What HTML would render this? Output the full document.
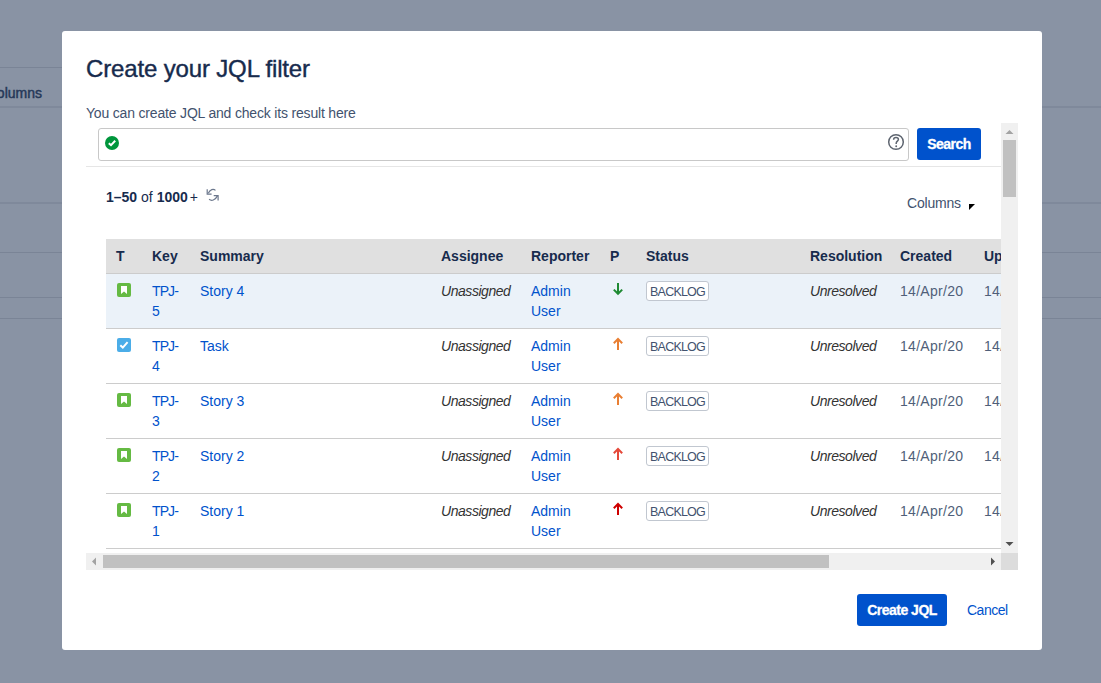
<!DOCTYPE html>
<html><head><meta charset="utf-8">
<style>
*{box-sizing:border-box}
html,body{margin:0;padding:0;width:1101px;height:683px;overflow:hidden;background:#8993a4;font-family:"Liberation Sans",sans-serif;color:#172b4d}
.bgline{position:absolute;height:1px;background:#7a8496}
#modal{position:absolute;left:62px;top:31px;width:980px;height:619px;background:#fff;border-radius:3px}
.t{position:absolute;white-space:nowrap;line-height:20px;font-size:14px}
.box{position:absolute}
.hd{font-weight:bold;color:#172b4d}
.lk{color:#0052cc}
.it{font-style:italic;color:#333;letter-spacing:-0.45px}
.dt{color:#505f79;letter-spacing:0.3px}
.loz{position:absolute;width:63px;height:20px;border:1px solid #c1c7d0;border-radius:3px;background:#fff;font-size:12.5px;line-height:20px;text-align:center;color:#42526e;letter-spacing:-0.8px}
.rowline{position:absolute;left:106px;width:895px;height:1px;background:#cccccc}
</style></head><body>
<!-- background lines -->
<div class="bgline" style="left:0;top:67px;width:62px"></div>
<div class="bgline" style="left:0;top:106px;width:1101px;height:2px;background:#7f899b"></div>
<div class="bgline" style="left:0;top:202px;width:1101px;height:2px;background:#7f899b"></div>
<div class="bgline" style="left:0;top:252px;width:1101px"></div>
<div class="bgline" style="left:0;top:297px;width:1101px"></div>
<div class="bgline" style="left:0;top:318px;width:1101px"></div>
<div class="t" style="right:1059px;top:83px;color:#253858;-webkit-text-stroke:0.45px #253858;letter-spacing:0px">Columns</div>

<div id="modal"></div>
<div class="t" style="left:86px;top:57px;font-size:24px;line-height:24px;color:#172b4d;letter-spacing:-0.15px;-webkit-text-stroke:0.4px #172b4d">Create your JQL filter</div>
<div class="t" style="left:86px;top:103px;color:#42526e;letter-spacing:-0.18px">You can create JQL and check its result here</div>

<!-- scroll container content -->
<div class="box" style="left:98px;top:128px;width:811px;height:33px;border:1px solid #c8c8c8;border-radius:3px;background:#fff"></div>
<svg class="box" style="left:105px;top:136px" width="14" height="14" viewBox="0 0 14 14"><circle cx="7" cy="7" r="7" fill="#00963c"/><path d="M3.8 7.2 L6 9.2 L10.2 4.8" stroke="#fff" stroke-width="2" fill="none"/></svg>
<svg class="box" style="left:887px;top:133px" width="18" height="18" viewBox="0 0 18 18"><circle cx="9" cy="9" r="7.3" stroke="#5e6570" stroke-width="1.5" fill="none"/><path d="M6.6 6.7 C6.6 5.2 7.7 4.5 9 4.5 C10.4 4.5 11.4 5.3 11.4 6.5 C11.4 8.1 9.2 8.3 9.2 10.3 V11" stroke="#5e6570" stroke-width="1.5" fill="none"/><circle cx="9.2" cy="13.3" r="0.95" fill="#5e6570"/></svg>
<div class="box" style="left:917px;top:128px;width:64px;height:32px;background:#0052cc;border-radius:3px;color:#fff;font-weight:bold;font-size:14px;line-height:32px;text-align:center;letter-spacing:-0.5px;-webkit-text-stroke:0.3px #fff">Search</div>
<div class="box" style="left:86px;top:166px;width:915px;height:1px;background:#e6e6e6"></div>

<div class="t" style="left:106px;top:187px;color:#172b4d"><b>1–50</b> of <b>1000</b><span style="margin-left:2px">+</span></div>
<svg class="box" style="left:204px;top:186px" width="18" height="18" viewBox="0 0 18 18" fill="none" stroke="#6b778c" stroke-width="1.2"><path d="M11.5 4.4 C9.5 2.5 6 3.2 4.3 7.2"/><path d="M3.2 3.2 V8.2 H7.6"/><path d="M5.1 13.3 C7.5 15.2 11 14.6 13.6 9.6"/><path d="M14.1 14.6 V9.6 H9.7"/></svg>

<div class="t" style="left:907px;top:193px;color:#42526e;letter-spacing:-0.2px">Columns</div>
<svg class="box" style="left:968px;top:203px" width="8" height="8" viewBox="0 0 8 8"><path d="M1 1 H7 L1 7 Z" fill="#000"/></svg>

<!-- table header -->
<div class="box" style="left:106px;top:239px;width:895px;height:34px;background:#e0e0e0"></div>
<div class="rowline" style="top:273px"></div>
<div class="t hd" style="left:116px;top:246px">T</div>
<div class="t hd" style="left:152px;top:246px">Key</div>
<div class="t hd" style="left:200px;top:246px">Summary</div>
<div class="t hd" style="left:441px;top:246px">Assignee</div>
<div class="t hd" style="left:531px;top:246px">Reporter</div>
<div class="t hd" style="left:610px;top:246px">P</div>
<div class="t hd" style="left:646px;top:246px">Status</div>
<div class="t hd" style="left:810px;top:246px">Resolution</div>
<div class="t hd" style="left:900px;top:246px">Created</div>
<div class="t hd" style="left:984px;top:246px;width:17px;overflow:hidden">Updated</div>

<!-- rows -->
<div class="box" style="left:106px;top:274px;width:895px;height:54px;background:#ebf2f9"></div>
<!--ROWS-->
<svg class="box" style="left:117px;top:283px" width="14" height="14" viewBox="0 0 14 14"><rect width="14" height="14" rx="2" fill="#65ba43"/><path d="M4 3 H10 V11 L7 8.6 L4 11 Z" fill="#fff"/></svg>
<div class="t lk" style="left:152px;top:281px;letter-spacing:-0.9px">TPJ-</div>
<div class="t lk" style="left:152px;top:301px">5</div>
<div class="t lk" style="left:200px;top:281px">Story 4</div>
<div class="t it" style="left:441px;top:281px">Unassigned</div>
<div class="t lk" style="left:531px;top:281px">Admin</div>
<div class="t lk" style="left:531px;top:301px">User</div>
<svg class="box" style="left:612px;top:282px" width="12" height="14" viewBox="0 0 12 14" fill="none" stroke="#1f8a33" stroke-width="2"><path d="M6 1 V12"/><path d="M1.8 7.6 L6 11.8 L10.2 7.6"/></svg>
<div class="loz" style="left:646px;top:281px">BACKLOG</div>
<div class="t it" style="left:810px;top:281px">Unresolved</div>
<div class="t dt" style="left:900px;top:281px">14/Apr/20</div>
<div class="t dt" style="left:984px;top:281px;width:17px;overflow:hidden">14/Apr/20</div>
<div class="rowline" style="top:328px"></div>
<svg class="box" style="left:117px;top:338px" width="14" height="14" viewBox="0 0 14 14"><rect width="14" height="14" rx="2" fill="#4bade8"/><path d="M3.3 7.3 L5.8 9.6 L10.6 4.2" stroke="#fff" stroke-width="2" fill="none"/></svg>
<div class="t lk" style="left:152px;top:336px;letter-spacing:-0.9px">TPJ-</div>
<div class="t lk" style="left:152px;top:356px">4</div>
<div class="t lk" style="left:200px;top:336px">Task</div>
<div class="t it" style="left:441px;top:336px">Unassigned</div>
<div class="t lk" style="left:531px;top:336px">Admin</div>
<div class="t lk" style="left:531px;top:356px">User</div>
<svg class="box" style="left:612px;top:337px" width="12" height="14" viewBox="0 0 12 14" fill="none" stroke="#e97f33" stroke-width="2"><path d="M6 13 V2"/><path d="M1.8 6.2 L6 2 L10.2 6.2"/></svg>
<div class="loz" style="left:646px;top:336px">BACKLOG</div>
<div class="t it" style="left:810px;top:336px">Unresolved</div>
<div class="t dt" style="left:900px;top:336px">14/Apr/20</div>
<div class="t dt" style="left:984px;top:336px;width:17px;overflow:hidden">14/Apr/20</div>
<div class="rowline" style="top:383px"></div>
<svg class="box" style="left:117px;top:393px" width="14" height="14" viewBox="0 0 14 14"><rect width="14" height="14" rx="2" fill="#65ba43"/><path d="M4 3 H10 V11 L7 8.6 L4 11 Z" fill="#fff"/></svg>
<div class="t lk" style="left:152px;top:391px;letter-spacing:-0.9px">TPJ-</div>
<div class="t lk" style="left:152px;top:411px">3</div>
<div class="t lk" style="left:200px;top:391px">Story 3</div>
<div class="t it" style="left:441px;top:391px">Unassigned</div>
<div class="t lk" style="left:531px;top:391px">Admin</div>
<div class="t lk" style="left:531px;top:411px">User</div>
<svg class="box" style="left:612px;top:392px" width="12" height="14" viewBox="0 0 12 14" fill="none" stroke="#e97f33" stroke-width="2"><path d="M6 13 V2"/><path d="M1.8 6.2 L6 2 L10.2 6.2"/></svg>
<div class="loz" style="left:646px;top:391px">BACKLOG</div>
<div class="t it" style="left:810px;top:391px">Unresolved</div>
<div class="t dt" style="left:900px;top:391px">14/Apr/20</div>
<div class="t dt" style="left:984px;top:391px;width:17px;overflow:hidden">14/Apr/20</div>
<div class="rowline" style="top:438px"></div>
<svg class="box" style="left:117px;top:448px" width="14" height="14" viewBox="0 0 14 14"><rect width="14" height="14" rx="2" fill="#65ba43"/><path d="M4 3 H10 V11 L7 8.6 L4 11 Z" fill="#fff"/></svg>
<div class="t lk" style="left:152px;top:446px;letter-spacing:-0.9px">TPJ-</div>
<div class="t lk" style="left:152px;top:466px">2</div>
<div class="t lk" style="left:200px;top:446px">Story 2</div>
<div class="t it" style="left:441px;top:446px">Unassigned</div>
<div class="t lk" style="left:531px;top:446px">Admin</div>
<div class="t lk" style="left:531px;top:466px">User</div>
<svg class="box" style="left:612px;top:447px" width="12" height="14" viewBox="0 0 12 14" fill="none" stroke="#e5493a" stroke-width="2"><path d="M6 13 V2"/><path d="M1.8 6.2 L6 2 L10.2 6.2"/></svg>
<div class="loz" style="left:646px;top:446px">BACKLOG</div>
<div class="t it" style="left:810px;top:446px">Unresolved</div>
<div class="t dt" style="left:900px;top:446px">14/Apr/20</div>
<div class="t dt" style="left:984px;top:446px;width:17px;overflow:hidden">14/Apr/20</div>
<div class="rowline" style="top:493px"></div>
<svg class="box" style="left:117px;top:503px" width="14" height="14" viewBox="0 0 14 14"><rect width="14" height="14" rx="2" fill="#65ba43"/><path d="M4 3 H10 V11 L7 8.6 L4 11 Z" fill="#fff"/></svg>
<div class="t lk" style="left:152px;top:501px;letter-spacing:-0.9px">TPJ-</div>
<div class="t lk" style="left:152px;top:521px">1</div>
<div class="t lk" style="left:200px;top:501px">Story 1</div>
<div class="t it" style="left:441px;top:501px">Unassigned</div>
<div class="t lk" style="left:531px;top:501px">Admin</div>
<div class="t lk" style="left:531px;top:521px">User</div>
<svg class="box" style="left:612px;top:502px" width="12" height="14" viewBox="0 0 12 14" fill="none" stroke="#ce0000" stroke-width="2"><path d="M6 13 V2"/><path d="M1.8 6.2 L6 2 L10.2 6.2"/></svg>
<div class="loz" style="left:646px;top:501px">BACKLOG</div>
<div class="t it" style="left:810px;top:501px">Unresolved</div>
<div class="t dt" style="left:900px;top:501px">14/Apr/20</div>
<div class="t dt" style="left:984px;top:501px;width:17px;overflow:hidden">14/Apr/20</div>
<div class="rowline" style="top:548px"></div>
<div class="box" style="left:1001px;top:123px;width:17px;height:430px;background:#f0f0f0"></div>
<div class="box" style="left:1003px;top:140px;width:13px;height:57px;background:#c1c1c1"></div>
<svg class="box" style="left:1005px;top:129px" width="9" height="6" viewBox="0 0 9 6"><path d="M0.5 5 L4.5 1 L8.5 5 Z" fill="#a3a3a3"/></svg>
<svg class="box" style="left:1005px;top:541px" width="9" height="6" viewBox="0 0 9 6"><path d="M0.5 1 L4.5 5 L8.5 1 Z" fill="#505050"/></svg>
<div class="box" style="left:86px;top:553px;width:915px;height:17px;background:#f0f0f0"></div>
<div class="box" style="left:103px;top:555px;width:726px;height:13px;background:#c1c1c1"></div>
<svg class="box" style="left:91px;top:557px" width="6" height="9" viewBox="0 0 6 9"><path d="M5 0.5 L1 4.5 L5 8.5 Z" fill="#a3a3a3"/></svg>
<svg class="box" style="left:990px;top:557px" width="6" height="9" viewBox="0 0 6 9"><path d="M1 0.5 L5 4.5 L1 8.5 Z" fill="#505050"/></svg>
<div class="box" style="left:1001px;top:553px;width:17px;height:17px;background:#dcdcdc"></div>
<div class="box" style="left:857px;top:594px;width:90px;height:32px;background:#0052cc;border-radius:3px;color:#fff;font-weight:bold;font-size:14px;line-height:32px;text-align:center;letter-spacing:-0.5px;-webkit-text-stroke:0.3px #fff">Create JQL</div>
<div class="t" style="left:967px;top:600px;color:#0052cc;letter-spacing:-0.5px">Cancel</div>
<!--/ROWS-->
</body></html>
